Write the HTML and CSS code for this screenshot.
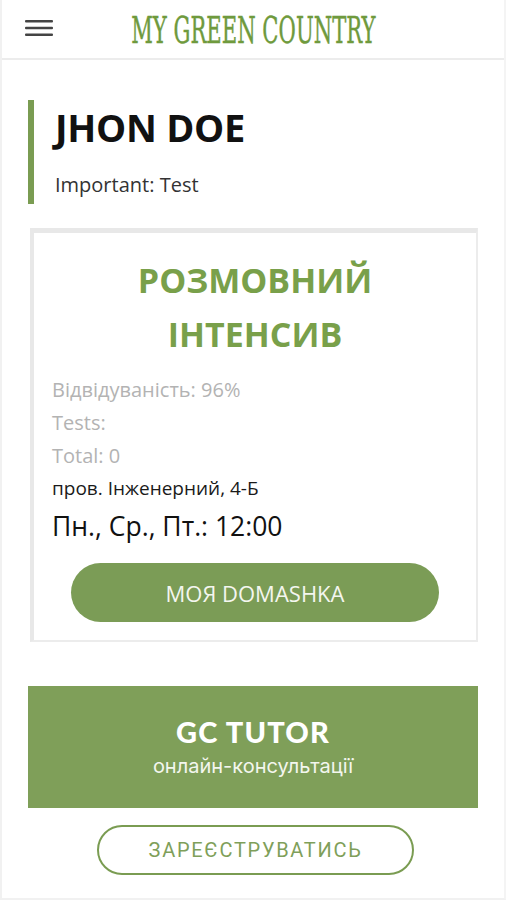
FILE: index.html
```html
<!DOCTYPE html>
<html lang="uk">
<head>
<meta charset="utf-8">
<title>My Green Country</title>
<link rel="stylesheet" href="styles.css">
</head>
<body>
<div class="page">
  <header class="topbar">
    <button class="burger" aria-label="Menu">
      <svg width="28" height="18" viewBox="0 0 28 18"><rect x="0" y="1" width="28" height="2.6" rx="1" fill="#444"/><rect x="0" y="7.7" width="28" height="2.6" rx="1" fill="#444"/><rect x="0" y="14.4" width="28" height="2.6" rx="1" fill="#444"/></svg>
    </button>
    <div class="brand"><span class="brand-text">MY GREEN COUNTRY</span></div>
  </header>

  <main class="content">
    <section class="profile">
      <h1 class="name">JHON DOE</h1>
      <p class="note">Important: Test</p>
    </section>

    <section class="card">
      <h2 class="course">РОЗМОВНИЙ<br>ІНТЕНСИВ</h2>
      <ul class="stats">
        <li class="muted">Відвідуваність: 96%</li>
        <li class="muted">Tests:</li>
        <li class="muted">Total: 0</li>
        <li class="addr">пров. Інженерний, 4-Б</li>
        <li class="time">Пн., Ср., Пт.: 12:00</li>
      </ul>
      <a class="btn-home" href="#">МОЯ DOMASHKA</a>
    </section>

    <section class="banner">
      <div class="banner-title">GC TUTOR</div>
      <div class="banner-sub">онлайн-консультації</div>
    </section>

    <div class="reg-wrap">
      <a class="btn-reg" href="#">ЗАРЕЄСТРУВАТИСЬ</a>
    </div>
  </main>
</div>
</body>
</html>
```

FILE: styles.css
```css
* { box-sizing: border-box; }
html, body { margin: 0; padding: 0; background: #fff; }
body { font-family: "Open Sans", "Noto Sans", sans-serif; color: #222; }

.page {
  width: 506px;
  height: 900px;
  overflow: hidden;
  border-left: 2px solid #f1f1f1;
  border-right: 2px solid #f4f4f4;
  border-bottom: 2px solid #f1f1f1;
}

.topbar {
  height: 60px;
  border-bottom: 2px solid #ececec;
  display: flex;
  align-items: center;
  position: relative;
}
.burger {
  background: none;
  border: 0;
  padding: 0;
  margin-left: 23px;
  margin-top: -2px;
  width: 28px;
  height: 18px;
  display: flex;
  cursor: pointer;
}
.brand {
  position: absolute;
  left: 0; right: 0; top: 0; bottom: 0;
  display: flex;
  align-items: center;
  justify-content: center;
  pointer-events: none;
}
.brand-text {
  display: inline-block;
  font-family: "DejaVu Serif Condensed", "DejaVu Serif", serif;
  font-size: 37px;
  line-height: 1;
  color: #6f9a3d;
  transform: scaleX(0.635);
  margin-top: 2px;
  white-space: nowrap;
  -webkit-text-stroke: 0.4px #6f9a3d;
}

.content {
  padding: 40px 26px 0 26px;
}

.profile {
  border-left: 6px solid #7a9c52;
  padding: 2px 0 4px 21px;
}
.name {
  margin: 0;
  font-size: 38px;
  line-height: 50px;
  font-weight: 700;
  color: #111;
  letter-spacing: -0.3px;
}
.note {
  margin: 18px 0 0 0;
  font-size: 20px;
  line-height: 30px;
  color: #333;
}

.card {
  margin: 24px 0 0 2px;
  border: 2px solid #ececec;
  border-top: 5px solid #e8e8e8;
  border-left: 4px solid #e8e8e8;
  padding: 20px 0 18px 0;
}
.course {
  margin: 0;
  text-align: center;
  font-size: 34px;
  line-height: 54px;
  font-weight: 700;
  color: #79a04a;
}
.stats {
  list-style: none;
  margin: 12px 0 0 0;
  padding: 0 0 0 18px;
}
.stats li {
  font-size: 20px;
  line-height: 33px;
}
.muted { color: #b3b3b3; }
.addr { color: #1a1a1a; font-size: 19px !important; }
.stats .time {
  font-size: 26.5px;
  line-height: 42px;
  color: #111;
}
.btn-home {
  display: flex;
  align-items: center;
  justify-content: center;
  margin: 16px 37px 0 37px;
  height: 59px;
  border-radius: 30px;
  background: #7b9c56;
  color: #f4f6ef;
  text-decoration: none;
  font-size: 22px;
  letter-spacing: 0;
}

.banner {
  margin-top: 44px;
  height: 122px;
  background: #7f9f59;
  display: flex;
  flex-direction: column;
  align-items: center;
  justify-content: center;
  color: #fff;
}
.banner-title {
  font-family: "Lato", sans-serif;
  font-weight: 900;
  font-size: 29px;
  line-height: 34px;
  letter-spacing: 1.2px;
}
.banner-sub {
  font-family: "Inter", sans-serif;
  font-weight: 400;
  font-size: 20px;
  line-height: 26px;
  margin-top: 4px;
  color: #f3f6ee;
}

.reg-wrap {
  display: flex;
  justify-content: center;
  margin-top: 17px;
}
.btn-reg {
  width: 317px;
  height: 50px;
  border: 2px solid #7a9c52;
  border-radius: 26px;
  display: flex;
  align-items: center;
  justify-content: center;
  color: #7f9f5a;
  text-decoration: none;
  font-family: "Roboto", sans-serif;
  font-size: 20px;
  letter-spacing: 1.7px;
  margin-left: 5px;
}
```
